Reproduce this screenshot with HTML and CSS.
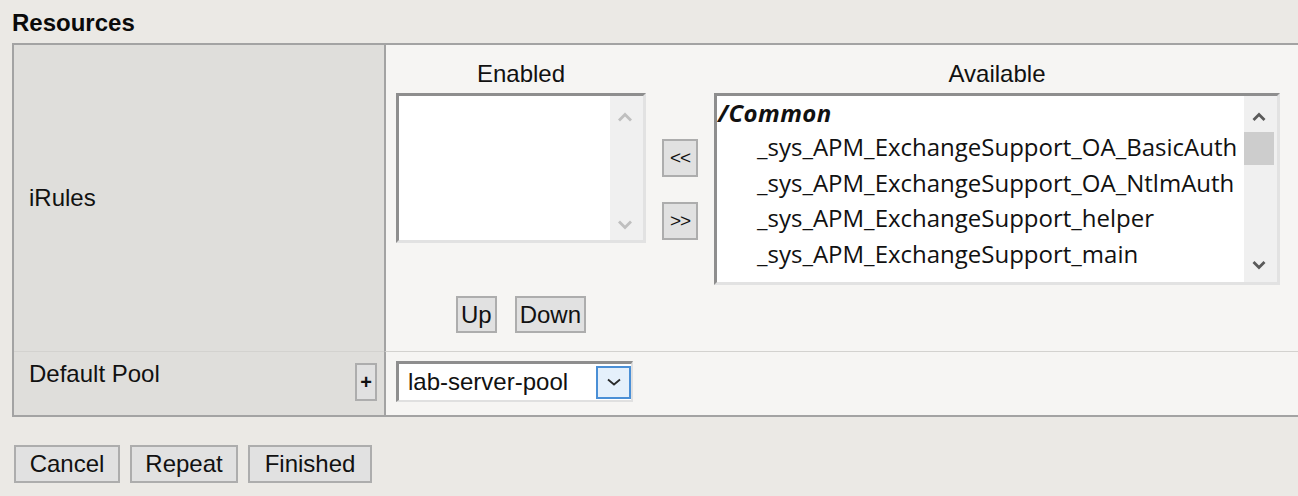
FILE: index.html
```html
<!DOCTYPE html>
<html>
<head>
<meta charset="utf-8">
<title>Resources</title>
<link rel="stylesheet" href="styles.css">
</head>
<body>
<div class="page">
  <h2 class="section-title">Resources</h2>
  <div class="props">
    <div class="prop-label label-middle">iRules</div>
    <div class="prop-value irules">
      <div class="list-col">
        <div class="list-caption">Enabled</div>
        <div class="listbox listbox-enabled">
          <div class="list-items"></div>
          <div class="vscroll">
            <div class="sb-btn sb-up disabled">
              <svg width="16" height="10" viewBox="0 0 16 10"><polyline points="2,8.5 8,2.5 14,8.5" fill="none" stroke="currentColor" stroke-width="2.8"/></svg>
            </div>
            <div class="sb-space"></div>
            <div class="sb-btn sb-down-short disabled">
              <svg width="16" height="10" viewBox="0 0 16 10"><polyline points="2,1.5 8,7.5 14,1.5" fill="none" stroke="currentColor" stroke-width="2.8"/></svg>
            </div>
          </div>
        </div>
        <div class="updown">
          <button class="btn btn-tight">Up</button>
          <button class="btn btn-tight">Down</button>
        </div>
      </div>
      <div class="move-col">
        <button class="btn btn-move">&lt;&lt;</button>
        <button class="btn btn-move">&gt;&gt;</button>
      </div>
      <div class="list-col available-col">
        <div class="list-caption">Available</div>
        <div class="listbox listbox-available">
          <div class="list-items">
            <div class="list-group">/Common</div>
            <div class="list-item">_sys_APM_ExchangeSupport_OA_BasicAuth</div>
            <div class="list-item">_sys_APM_ExchangeSupport_OA_NtlmAuth</div>
            <div class="list-item">_sys_APM_ExchangeSupport_helper</div>
            <div class="list-item">_sys_APM_ExchangeSupport_main</div>
            <div class="list-item list-item-cut">_sys_APM_MS_Office_OFBA_Support</div>
          </div>
          <div class="vscroll">
            <div class="sb-btn sb-up">
              <svg width="16" height="10" viewBox="0 0 16 10"><polyline points="2.5,8 8,2.5 13.5,8" fill="none" stroke="currentColor" stroke-width="2.8"/></svg>
            </div>
            <div class="sb-thumb"></div>
            <div class="sb-space"></div>
            <div class="sb-btn sb-down">
              <svg width="16" height="10" viewBox="0 0 16 10"><polyline points="2.5,2 8,7.5 13.5,2" fill="none" stroke="currentColor" stroke-width="2.8"/></svg>
            </div>
          </div>
        </div>
      </div>
    </div>

    <div class="prop-label row2 pool-label">
      <span class="pool-text">Default Pool</span>
      <button class="btn btn-plus">+</button>
    </div>
    <div class="prop-value row2 pool-value">
      <div class="select">
        <span class="select-text">lab-server-pool</span>
        <span class="select-arrow">
          <svg width="18" height="10" viewBox="0 0 18 10"><polyline points="3,2.5 9,7.5 15,2.5" fill="none" stroke="#2b2b2b" stroke-width="1.8"/></svg>
        </span>
      </div>
    </div>
  </div>

  <div class="actions">
    <button class="btn btn-wide btn-cancel">Cancel</button>
    <button class="btn btn-wide btn-repeat">Repeat</button>
    <button class="btn btn-wide btn-finished">Finished</button>
  </div>
</div>
</body>
</html>
```

FILE: styles.css
```css
* { box-sizing: border-box; }
html, body { margin: 0; padding: 0; }
body {
  background: #ebe9e5;
  font-family: "Liberation Sans", Arial, sans-serif;
  font-size: 24px;
  color: #111;
  width: 1298px;
  height: 496px;
  overflow: hidden;
}
.page { padding: 9px 0 0 12px; }
.section-title {
  margin: 0;
  font-size: 24px;
  font-weight: bold;
  line-height: 28px;
  color: #0a0a0a;
}
.props {
  margin-top: 6px;
  width: 1320px;
  display: grid;
  grid-template-columns: 370px 1fr;
  grid-template-rows: 306px 64px;
  border: 2px solid #a3a3a3;
  border-right: none;
}
.prop-label {
  background: #dfdedb;
  padding-left: 15px;
  line-height: 28px;
}
.label-middle { display: flex; align-items: center; }
.prop-value {
  background: #f6f5f3;
  border-left: 2px solid #a3a3a3;
  padding-left: 10px;
}
.row2 { border-top: 1px solid #d3d2cf; }

/* iRules */
.irules { display: flex; align-items: flex-start; }
.list-col {
  display: flex;
  flex-direction: column;
  align-items: center;
  padding-top: 15px;
}
.list-caption { line-height: 28px; height: 28px; }
.listbox {
  margin-top: 5px;
  display: flex;
  background: #fff;
  border-style: solid;
  border-width: 3px;
  border-color: #8e8e8e #e2e2e2 #e2e2e2 #8e8e8e;
  overflow: hidden;
}
.listbox-enabled { width: 250px; height: 150px; }
.listbox-available { width: 566px; height: 192px; }
.list-items {
  flex: 1;
  overflow: hidden;
  padding-top: 1px;
  font-family: "Open Sans", "DejaVu Sans", sans-serif;
  font-size: 24px;
  color: #111;
  white-space: nowrap;
}
.list-group {
  line-height: 32px;
  height: 32px;
  font-weight: bold;
  font-style: italic;
  font-size: 24px;
  letter-spacing: 0.4px;
  padding-left: 1px;
}
.list-item {
  line-height: 35.5px;
  height: 35.5px;
  padding-left: 40px;
}
.list-item-cut { margin-top: 6px; }
.vscroll {
  width: 33px;
  flex: none;
  display: flex;
  flex-direction: column;
  background: #f0f0f0;
}
.sb-btn {
  display: flex;
  align-items: center;
  justify-content: center;
  color: #5a5a5a;
  padding-right: 3px;
}
.sb-btn.disabled { color: #bfbfbf; padding-right: 3px; }
.sb-up { height: 36px; padding-top: 6px; }
.sb-down { height: 34px; }
.sb-down-short { height: 30px; }
.sb-space { flex: 1; }
.sb-thumb {
  width: 30px;
  height: 33px;
  background: #cdcdcd;
}
.updown {
  margin-top: 53px;
  display: flex;
  gap: 18px;
}
.move-col {
  display: flex;
  flex-direction: column;
  margin-left: 16px;
  padding-top: 94px;
  gap: 25px;
}
.available-col { margin-left: 16px; }

/* buttons */
.btn {
  font-family: "Liberation Sans", Arial, sans-serif;
  font-size: 24px;
  line-height: 28px;
  color: #111;
  background: #e1e1e1;
  border: 2px solid #adadad;
  border-radius: 0;
  margin: 0;
  cursor: pointer;
}
.btn-tight { height: 37px; padding: 2px 3px; }
.btn-move {
  width: 36px;
  height: 38px;
  padding: 0;
  font-size: 19px;
  letter-spacing: -1px;
}
.btn-wide { height: 38px; padding: 3px 0; text-align: center; }
.btn-cancel { width: 106px; }
.btn-repeat { width: 108px; }
.btn-finished { width: 124px; }
.btn-plus {
  width: 22px;
  height: 38px;
  padding: 0;
  font-size: 20px;
  font-weight: bold;
  line-height: 20px;
}

/* default pool */
.pool-label {
  display: flex;
  justify-content: space-between;
  align-items: flex-start;
  padding-top: 8px;
  padding-right: 7px;
}
.pool-label .btn-plus { margin-top: 3px; }
.pool-value { padding-top: 9px; }
.select {
  width: 237px;
  height: 41px;
  display: flex;
  align-items: center;
  background: #fff;
  border-style: solid;
  border-width: 3px 2px 2px 3px;
  border-color: #8e8e8e #e0e0e0 #e0e0e0 #8e8e8e;
}
.select-text {
  flex: 1;
  padding-left: 9px;
  line-height: 28px;
}
.select-arrow {
  width: 35px;
  height: 33px;
  margin-left: 1px;
  display: flex;
  align-items: center;
  justify-content: center;
  background: #e5f0fb;
  border: 2px solid #4a8fd6;
}

.actions {
  margin-top: 28px;
  margin-left: 2px;
  display: flex;
  gap: 10px;
}
```
